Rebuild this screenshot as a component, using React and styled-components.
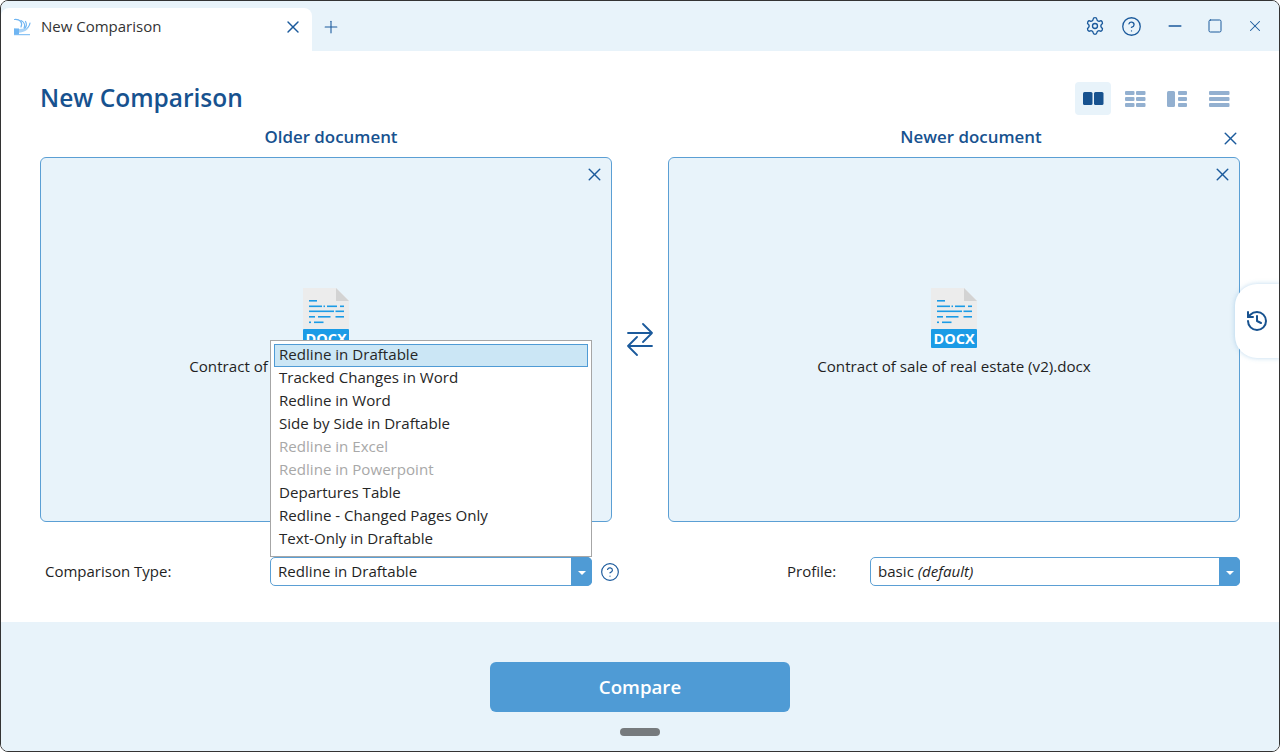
import React from 'react';
import styled, { createGlobalStyle } from 'styled-components';
import { Settings, CircleHelp, History, X, Plus, Minus, Square } from 'lucide-react';

const GlobalStyle = createGlobalStyle`
  html, body {
    margin: 0;
    padding: 0;
    background: #ffffff;
  }
  * {
    box-sizing: border-box;
  }
`;

const Window = styled.div`
  width: 1280px;
  height: 752px;
  display: flex;
  flex-direction: column;
  position: relative;
  overflow: hidden;
  background: #ffffff;
  border: 1px solid #333333;
  border-radius: 8px;
  font-family: "Open Sans", "Noto Sans", sans-serif;
  font-size: 15px;
  color: #1f1f1f;
`;

const TitleBar = styled.header`
  height: 50px;
  flex: none;
  display: flex;
  align-items: flex-end;
  background: #e8f3fa;
`;

const Tab = styled.div`
  width: 311px;
  height: 43px;
  display: flex;
  align-items: center;
  padding: 0 7px 5px 12px;
  background: #ffffff;
  border-radius: 8px 8px 0 0;
  font-size: 15px;
  color: #333333;
`;

const TabTitle = styled.span`
  flex: 1;
  margin: 0 0 2px 10px;
`;

const IconButton = styled.button`
  display: flex;
  align-items: center;
  justify-content: center;
  flex: none;
  width: ${p => p.$size || 24}px;
  height: ${p => p.$size || 24}px;
  padding: 0;
  border: none;
  background: transparent;
  color: ${p => p.$color || '#1b5a9c'};
`;

const AddTab = styled(IconButton)`
  margin: 0 0 12px 7px;
`;

const WindowControls = styled.div`
  margin: 0 12px 12px auto;
  display: flex;
  align-items: center;
`;

const ControlButton = styled(IconButton)`
  margin-left: ${p => p.$gap || 0}px;
`;

const Main = styled.main`
  flex: 1;
  display: flex;
  flex-direction: column;
  padding: 31px 39px 0;
`;

const HeaderRow = styled.div`
  height: 33px;
  display: flex;
  align-items: center;
  justify-content: space-between;
`;

const PageTitle = styled.h1`
  margin: 0 0 3px;
  font-size: 24.5px;
  font-weight: 600;
  color: #17528f;
`;

const ViewSwitch = styled.div`
  display: flex;
  gap: 6px;
  margin-right: 3px;
`;

const ViewButton = styled.button`
  width: 36px;
  height: 33px;
  padding: 0;
  display: flex;
  align-items: center;
  justify-content: center;
  border: none;
  border-radius: 4px;
  background: ${p => (p.$active ? '#e8f3fa' : 'transparent')};
  color: ${p => (p.$active ? '#17528f' : '#93b0d0')};
`;

const Columns = styled.div`
  display: grid;
  grid-template-columns: 572px 1fr 572px;
`;

const DocColumn = styled.section`
  display: flex;
  flex-direction: column;
  position: relative;
`;

const ColumnLabel = styled.h2`
  height: 42px;
  margin: 0;
  padding: 10px 0 0 ${p => p.$shift}px;
  text-align: center;
  font-size: 16.9px;
  line-height: 24px;
  font-weight: 600;
  color: #17528f;
`;

const ColumnClose = styled(IconButton)`
  position: absolute;
  top: 11px;
  right: -2px;
`;

const DropPanel = styled.div`
  height: 365px;
  position: relative;
  display: flex;
  flex-direction: column;
  align-items: center;
  padding-top: 130px;
  background: #e8f3fa;
  border: 1px solid #5b9fd4;
  border-radius: 6px;
`;

const PanelClose = styled(IconButton)`
  position: absolute;
  top: 4px;
  right: 5px;
`;

const FileName = styled.div`
  margin-top: 6px;
  line-height: 24px;
  font-size: 15.15px;
  white-space: nowrap;
`;

const SwapSlot = styled.div`
  padding-top: 208px;
  display: flex;
  justify-content: center;
  color: #1b5a9c;
`;

const FormRow = styled.div`
  display: grid;
  grid-template-columns: 572px 1fr 572px;
  margin-top: 35px;
`;

const Field = styled.div`
  grid-column: ${p => p.$column};
  display: flex;
  align-items: center;
`;

const FieldLabel = styled.label`
  flex: none;
  width: ${p => p.$width}px;
  margin: 0 0 2px ${p => p.$offset}px;
  font-size: 15px;
`;

const SelectWrap = styled.div`
  position: relative;
  flex: none;
  width: ${p => p.$width}px;
  height: 29px;
  display: flex;
  align-items: center;
  padding: 0 0 2px 7px;
  background: #ffffff;
  border: 1px solid #5b9fd4;
  border-radius: 5px;
  font-size: 15.1px;
`;

const SelectArrow = styled.div`
  position: absolute;
  top: -1px;
  right: -1px;
  bottom: -1px;
  width: 21px;
  display: flex;
  align-items: center;
  justify-content: center;
  background: #4f9bd5;
  border-radius: 0 5px 5px 0;
  &::after {
    content: '';
    margin-top: 2px;
    border-left: 4px solid transparent;
    border-right: 4px solid transparent;
    border-top: 4px solid #ffffff;
  }
`;

const HelpButton = styled(IconButton)`
  margin-left: 6px;
`;

const Dropdown = styled.ul`
  position: absolute;
  left: -1px;
  right: -1px;
  bottom: 28px;
  margin: 0;
  padding: 3px 3px 5px;
  list-style: none;
  background: #ffffff;
  border: 1px solid #a6a6a6;
  z-index: 5;
`;

const DropdownItem = styled.li`
  height: 23px;
  padding-left: 5px;
  line-height: 21px;
  font-size: 15.1px;
  white-space: nowrap;
  color: ${p => (p.$disabled ? '#a8a8a8' : '#262626')};
  background: ${p => (p.$selected ? '#cbe6f5' : 'transparent')};
  outline: ${p => (p.$selected ? '1px solid #4f9bd5' : 'none')};
  outline-offset: -1px;
`;

const Footer = styled.footer`
  height: 129px;
  flex: none;
  position: relative;
  display: flex;
  justify-content: center;
  padding-top: 40px;
  background: #e8f3fa;
`;

const CompareButton = styled.button`
  width: 300px;
  height: 50px;
  padding: 0 0 2px;
  border: none;
  border-radius: 6px;
  background: #4f9bd5;
  color: #ffffff;
  font-family: inherit;
  font-size: 18.7px;
  font-weight: 600;
`;

const GripHandle = styled.div`
  position: absolute;
  left: 619px;
  bottom: 15px;
  width: 40px;
  height: 8px;
  border-radius: 4px;
  background: #767a7d;
`;

const HistoryTab = styled.button`
  position: absolute;
  top: 283px;
  right: -1px;
  width: 45px;
  height: 74px;
  padding: 0 0 0 10px;
  display: flex;
  align-items: center;
  justify-content: flex-start;
  background: #ffffff;
  border: none;
  border-radius: 22px 0 0 22px;
  box-shadow: 0 0 5px rgba(91, 159, 212, 0.4);
  color: #17528f;
`;

const COMPARISON_TYPES = [
  { label: 'Redline in Draftable', selected: true },
  { label: 'Tracked Changes in Word' },
  { label: 'Redline in Word' },
  { label: 'Side by Side in Draftable' },
  { label: 'Redline in Excel', disabled: true },
  { label: 'Redline in Powerpoint', disabled: true },
  { label: 'Departures Table' },
  { label: 'Redline - Changed Pages Only' },
  { label: 'Text-Only in Draftable' },
];

const Logo = () => (
  <svg width="18" height="18" viewBox="0 0 18 18" fill="none">
    <g stroke="#6fb5f2" strokeWidth="1.2" strokeLinecap="round">
      <path d="M1.500 1.500C7 1 10 4.500 8 9" />
      <path d="M8 2.500c3 1.500 4.500 4.500 3 7.500" />
      <path d="M12.500 3.500c1.500 2.500 1 5-1 7" />
      <path d="M17 5c-.500 3-2.500 5.500-5 6.500" />
    </g>
    <path d="M1 10.500c3 .500 7 .500 11 0 1.500-.200 3-.800 4-1.500-1 2-2.500 3.500-5 4.500-3 1.200-6.500 1.500-10 1.500z" fill="#a9d3f7" />
    <path d="M1 10.500h5v6H1z" fill="#6fb5f2" />
    <path d="M1 16.700h16" stroke="#6fb5f2" strokeWidth="1" />
  </svg>
);

const SideBySideIcon = () => (
  <svg width="21" height="13" viewBox="0 0 21 13" fill="currentColor">
    <rect x="0" width="9.500" height="13" rx="1.500" />
    <rect x="11" width="9.500" height="13" rx="1.500" />
  </svg>
);

const TableIcon = () => (
  <svg width="21" height="16" viewBox="0 0 21 16" fill="currentColor">
    {[0, 6, 12].map(y => (
      <React.Fragment key={y}>
        <rect x="0" y={y} width="9.500" height="4" rx="1" />
        <rect x="11" y={y} width="9.500" height="4" rx="1" />
      </React.Fragment>
    ))}
  </svg>
);

const SplitIcon = () => (
  <svg width="21" height="16" viewBox="0 0 21 16" fill="currentColor">
    <rect x="0" width="8" height="16" rx="1.500" />
    {[0, 6, 12].map(y => (
      <rect key={y} x="11" y={y} width="9" height="4" rx="1" />
    ))}
  </svg>
);

const RowsIcon = () => (
  <svg width="21" height="16" viewBox="0 0 21 16" fill="currentColor">
    {[0, 6, 12].map(y => (
      <rect key={y} x="0" y={y} width="20.500" height="4" rx="1" />
    ))}
  </svg>
);

const SwapIcon = () => (
  <svg width="28" height="33" viewBox="0 0 28 33" fill="none" stroke="currentColor" strokeWidth="1.8" strokeLinecap="round" strokeLinejoin="round">
    <path d="M2 10h24M17 1l9 9-9 9" />
    <path d="M26 23H2M11 14l-9 9 9 9" />
  </svg>
);

const DocIcon = () => (
  <svg width="46" height="60" viewBox="0 0 46 60">
    <path d="M0 0h33l13 13v30H0z" fill="#ececec" />
    <path d="M33 0l13 13H33z" fill="#d3d3d3" />
    <g fill="#1b9be6">
      <rect x="6" y="12" width="8" height="1.600" />
      <rect x="6" y="17.500" width="13" height="1.600" />
      <rect x="20.500" y="17.500" width="1.500" height="1.600" />
      <rect x="24" y="17.500" width="10" height="1.600" />
      <rect x="37" y="17.500" width="4" height="1.600" />
      <rect x="6" y="22.500" width="25" height="1.600" />
      <rect x="32.500" y="22.500" width="8.500" height="1.600" />
      <rect x="6" y="28" width="6" height="1.600" />
      <rect x="15" y="28" width="12.500" height="1.600" />
      <rect x="32.500" y="28" width="8.500" height="1.600" />
      <rect x="6" y="33.500" width="2" height="1.600" />
      <rect x="11" y="33.500" width="9.500" height="1.600" />
    </g>
    <rect x="0" y="41" width="46" height="19" rx="1" fill="#1b9be6" />
    <text x="23" y="56" textAnchor="middle" fill="#ffffff" fontFamily="Open Sans, sans-serif" fontSize="14.500" fontWeight="700">DOCX</text>
  </svg>
);

const CloseIcon = ({ size = 21 }) => <X size={size} strokeWidth={1.7} />;

const App = () => (
  <Window>
    <GlobalStyle />
    <TitleBar>
      <Tab>
        <Logo />
        <TabTitle>New Comparison</TabTitle>
        <IconButton><CloseIcon size={20} /></IconButton>
      </Tab>
      <AddTab><Plus size={20} strokeWidth={1.3} /></AddTab>
      <WindowControls>
        <ControlButton $size={26}><Settings size={20} strokeWidth={1.6} /></ControlButton>
        <ControlButton $size={26} $gap={10}><CircleHelp size={21} strokeWidth={1.5} /></ControlButton>
        <ControlButton $gap={19}><Minus size={20} strokeWidth={1.8} /></ControlButton>
        <ControlButton $gap={16}><Square size={16} strokeWidth={1.5} /></ControlButton>
        <ControlButton $gap={16}><X size={18} strokeWidth={1.4} /></ControlButton>
      </WindowControls>
    </TitleBar>
    <Main>
      <HeaderRow>
        <PageTitle>New Comparison</PageTitle>
        <ViewSwitch>
          <ViewButton $active><SideBySideIcon /></ViewButton>
          <ViewButton><TableIcon /></ViewButton>
          <ViewButton><SplitIcon /></ViewButton>
          <ViewButton><RowsIcon /></ViewButton>
        </ViewSwitch>
      </HeaderRow>
      <Columns>
        <DocColumn>
          <ColumnLabel $shift={10}>Older document</ColumnLabel>
          <DropPanel>
            <PanelClose><CloseIcon /></PanelClose>
            <DocIcon />
            <FileName>Contract of sale of real estate (v1).docx</FileName>
          </DropPanel>
        </DocColumn>
        <SwapSlot><SwapIcon /></SwapSlot>
        <DocColumn>
          <ColumnLabel $shift={34}>Newer document</ColumnLabel>
          <ColumnClose><CloseIcon /></ColumnClose>
          <DropPanel>
            <PanelClose><CloseIcon /></PanelClose>
            <DocIcon />
            <FileName>Contract of sale of real estate (v2).docx</FileName>
          </DropPanel>
        </DocColumn>
      </Columns>
      <FormRow>
        <Field $column={1}>
          <FieldLabel $width={225} $offset={5}>Comparison Type:</FieldLabel>
          <SelectWrap $width={322}>
            Redline in Draftable
            <SelectArrow />
            <Dropdown>
              {COMPARISON_TYPES.map(type => (
                <DropdownItem key={type.label} $selected={type.selected} $disabled={type.disabled}>
                  {type.label}
                </DropdownItem>
              ))}
            </Dropdown>
          </SelectWrap>
          <HelpButton><CircleHelp size={20} strokeWidth={1.4} /></HelpButton>
        </Field>
        <Field $column={3}>
          <FieldLabel $width={83} $offset={119}>Profile:</FieldLabel>
          <SelectWrap $width={370}>
            <span>basic <em>(default)</em></span>
            <SelectArrow />
          </SelectWrap>
        </Field>
      </FormRow>
    </Main>
    <Footer>
      <CompareButton>Compare</CompareButton>
      <GripHandle />
    </Footer>
    <HistoryTab><History size={24} strokeWidth={2} /></HistoryTab>
  </Window>
);

export default App;
